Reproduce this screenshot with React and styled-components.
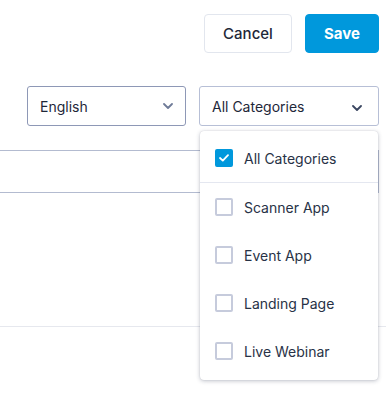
import React from "react";
import styled, { createGlobalStyle } from "styled-components";

const Global = createGlobalStyle`
  html, body { margin: 0; padding: 0; background: #fff; }
  body { font-family: Inter, "Noto Sans", sans-serif; color: #1e2739; overflow: hidden; }
  * { box-sizing: border-box; }
`;

const Page = styled.div`
  width: 386px;
  height: 396px;
  position: relative;
  overflow: hidden;
`;

const Header = styled.div`
  display: flex;
  justify-content: flex-end;
  gap: 13px;
  padding: 14px 7px 0 0;
  height: 53px;
`;

const Button = styled.button`
  height: 39px;
  border-radius: 4px;
  font-family: Inter, sans-serif;
  font-size: 15px;
  cursor: pointer;
  padding: 0;
  width: ${(p) => (p.$primary ? "74px" : "88px")};
  font-weight: ${(p) => (p.$primary ? 700 : 500)};
  color: ${(p) => (p.$primary ? "#fff" : "#1e2739")};
  background: ${(p) => (p.$primary ? "#0098dc" : "#fff")};
  border: 1px solid ${(p) => (p.$primary ? "#0098dc" : "#e2e6ee")};
`;

const Filters = styled.div`
  display: flex;
  gap: 13px;
  padding: 33px 7px 0 27px;
`;

const SelectWrap = styled.div`
  position: relative;
  width: ${(p) => p.$w}px;
`;

const Select = styled.div`
  height: 40px;
  border: 1px solid ${(p) => (p.$open ? "#b7bfd6" : "#8e98b6")};
  border-radius: 3px;
  display: flex;
  align-items: center;
  justify-content: space-between;
  padding: 0 ${(p) => (p.$open ? "16px" : "12px")} 0 12px;
  font-size: 14px;
  color: #1e2739;
  background: #fff;
`;

const Chevron = ({ color, down }) => (
  <svg width="10" height="6" viewBox="0 0 10 6" style={{ marginTop: down ? 4 : 0 }}>
    <path d="M1 1l4 4 4-4" fill="none" stroke={color} strokeWidth="1.8" strokeLinecap="round" strokeLinejoin="round" />
  </svg>
);

const Table = styled.div`
  margin-top: 24px;
  margin-left: -10px;
  width: 389px;
  height: 43px;
  border: 1px solid #b3bbd0;
  border-left: none;
`;

const Divider = styled.div`
  margin-top: 133px;
  height: 1px;
  background: #e6e8ee;
  width: 100%;
`;

const Menu = styled.div`
  position: absolute;
  top: 45px;
  left: 1px;
  width: 178px;
  background: #fff;
  border-radius: 4px;
  box-shadow: 0 1px 4px rgba(30, 40, 70, 0.28), 0 0 1px rgba(30, 40, 70, 0.2);
  padding: 3px 0 5px;
  z-index: 10;
`;

const Item = styled.label`
  display: flex;
  align-items: center;
  gap: 11px;
  padding-left: 15px;
  font-size: 14px;
  color: #283246;
  border-bottom: ${(p) => (p.$sep ? "1px solid #e4e7f0" : "none")};
  height: ${(p) => (p.$sep ? "49px" : "48px")};
`;

const Box = styled.span`
  width: 18px;
  height: 18px;
  border-radius: 2px;
  display: inline-flex;
  align-items: center;
  justify-content: center;
  flex: none;
  background: ${(p) => (p.$on ? "#0098dc" : "#fff")};
  border: 2px solid ${(p) => (p.$on ? "#0098dc" : "#c6cbdc")};
`;

const categories = ["Scanner App", "Event App", "Landing Page", "Live Webinar"];

export default function App() {
  return (
    <Page>
      <Global />
      <Header>
        <Button>Cancel</Button>
        <Button $primary>Save</Button>
      </Header>
      <Filters>
        <SelectWrap $w={159}>
          <Select>
            English
            <Chevron color="#6f7b98" />
          </Select>
        </SelectWrap>
        <SelectWrap $w={180}>
          <Select $open>
            All Categories
            <Chevron color="#3a4660" down />
          </Select>
          <Menu>
            <Item $sep>
              <Box $on>
                <svg width="10" height="8" viewBox="0 0 10 8">
                  <path d="M1 4l2.8 2.6L9 1.2" fill="none" stroke="#fff" strokeWidth="1.8" strokeLinecap="round" strokeLinejoin="round" />
                </svg>
              </Box>
              All Categories
            </Item>
            {categories.map((c) => (
              <Item key={c}>
                <Box />
                {c}
              </Item>
            ))}
          </Menu>
        </SelectWrap>
      </Filters>
      <Table />
      <Divider />
    </Page>
  );
}
